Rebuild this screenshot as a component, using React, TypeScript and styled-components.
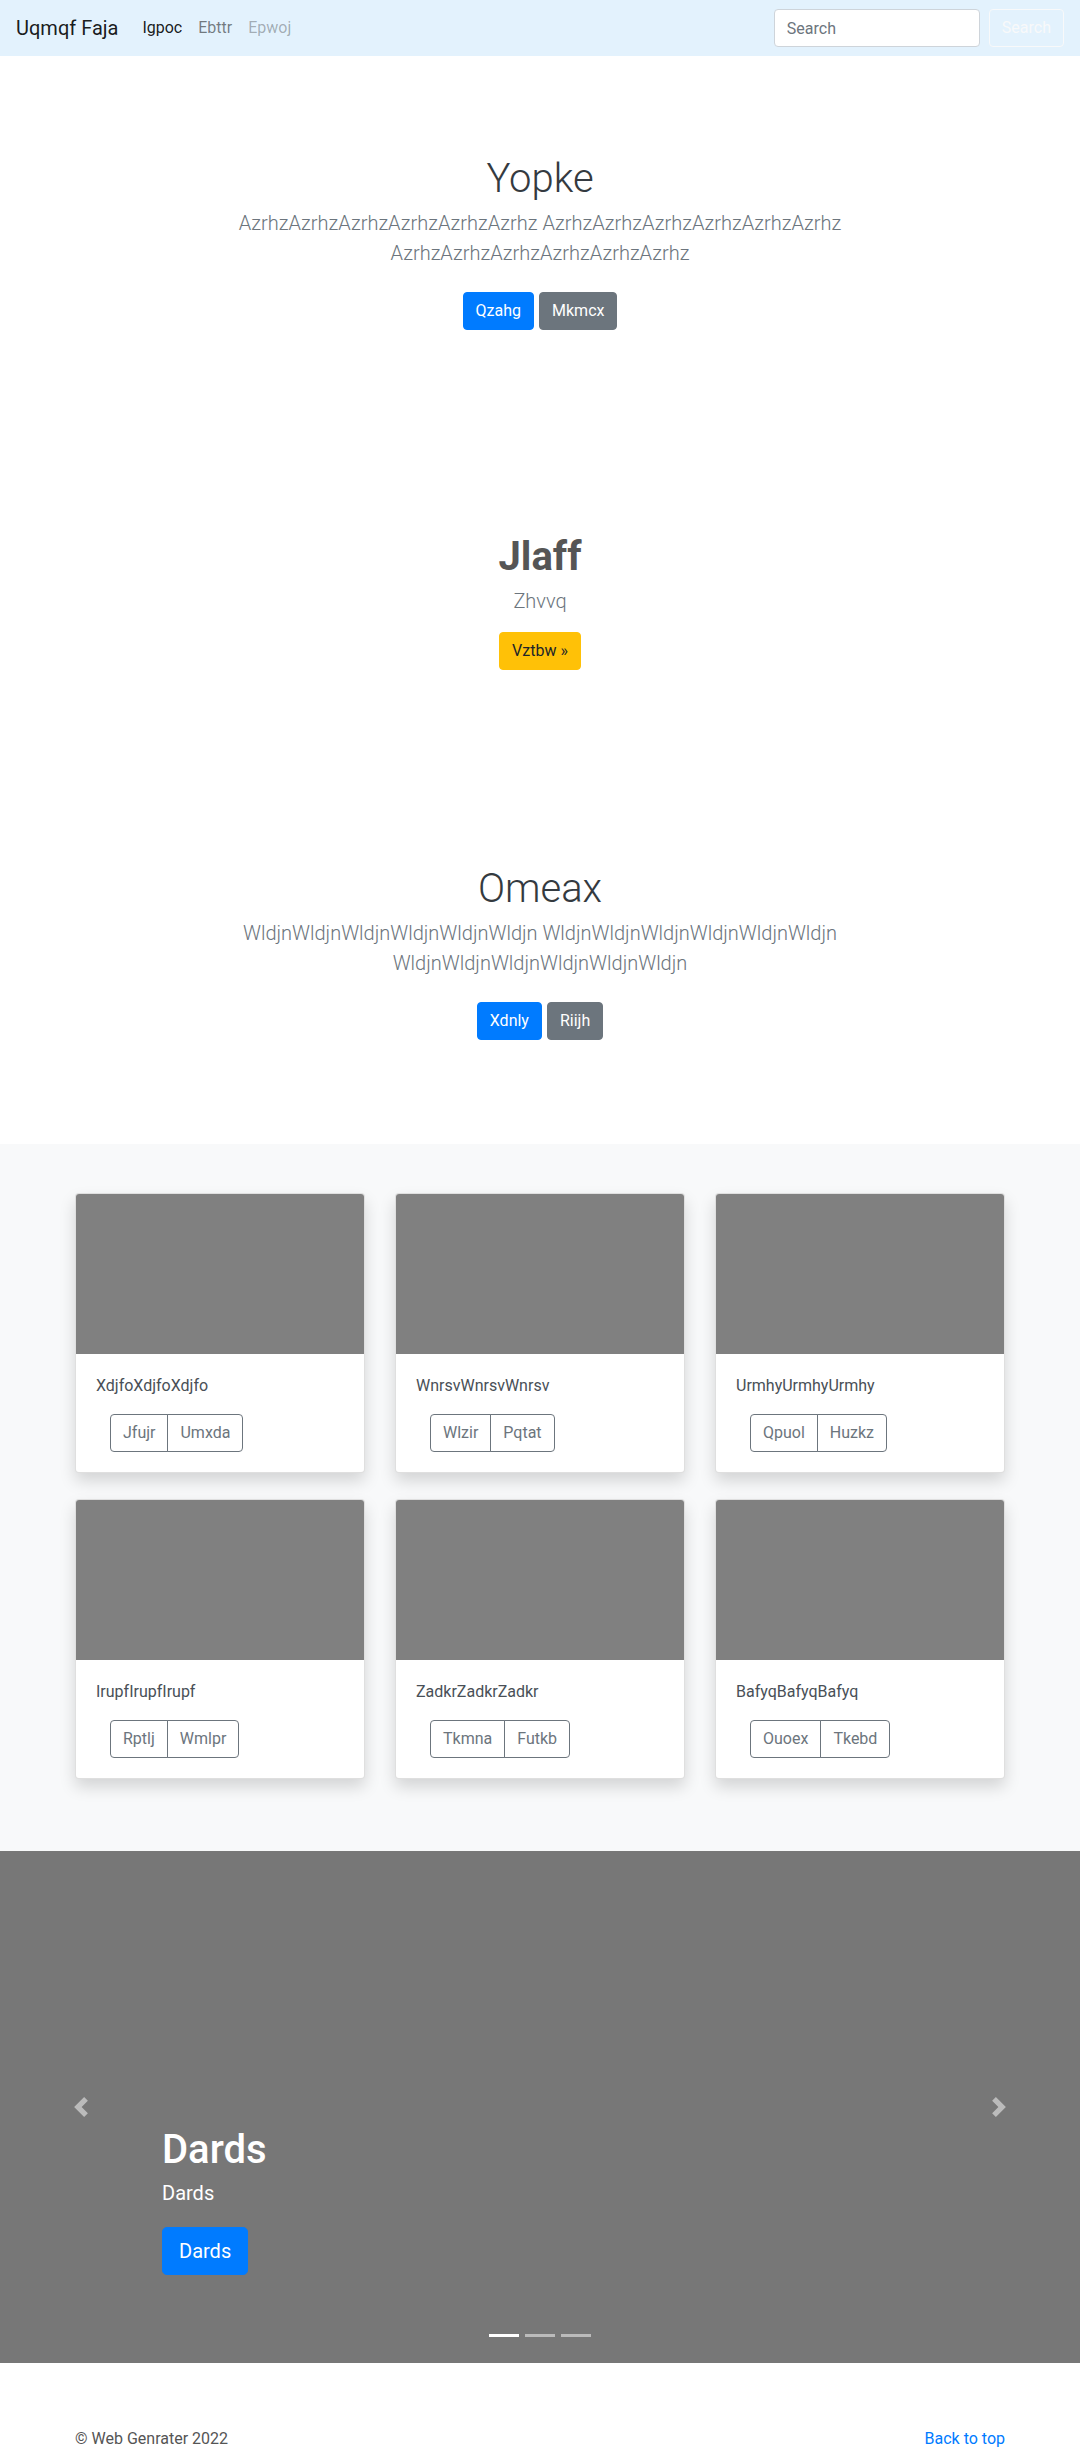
import React from "react";
import styled, { createGlobalStyle } from "styled-components";

const GlobalStyle = createGlobalStyle`
  * { box-sizing: border-box; }
  html, body { overflow-x: hidden; }
  body {
    margin: 0;
    font-family: "Segoe UI", Roboto, "Noto Sans", "Liberation Sans", sans-serif;
    font-size: 16px;
    line-height: 1.5;
    color: #212529;
    background: #fff;
  }
`;

const Navbar = styled.nav`
  display: flex;
  align-items: center;
  justify-content: space-between;
  height: 56px;
  padding: 0 16px;
  background: #e3f2fd;
`;

const NavLeft = styled.div`
  display: flex;
  align-items: center;
`;

const Brand = styled.a`
  font-size: 20px;
  line-height: 30px;
  color: rgba(0, 0, 0, 0.9);
  margin-right: 16px;
  text-decoration: none;
`;

const NavLink = styled.a<{ $state: "active" | "normal" | "disabled" }>`
  padding: 8px;
  font-size: 16px;
  text-decoration: none;
  color: ${(p) =>
    p.$state === "active"
      ? "rgba(0,0,0,0.9)"
      : p.$state === "disabled"
      ? "rgba(0,0,0,0.3)"
      : "rgba(0,0,0,0.5)"};
`;

const SearchForm = styled.form`
  display: flex;
  align-items: center;
`;

const SearchInput = styled.input`
  width: 206px;
  height: 38px;
  padding: 6px 12px;
  margin-right: 9px;
  font: inherit;
  font-size: 16px;
  color: #495057;
  background: #fff;
  border: 1px solid #ced4da;
  border-radius: 4px;
  &::placeholder { color: #6c757d; }
`;

const SearchButton = styled.button`
  height: 38px;
  padding: 6px 12px;
  font: inherit;
  font-size: 16px;
  color: #f8f9fa;
  background: transparent;
  border: 1px solid #f8f9fa;
  border-radius: 4px;
`;

const Hero = styled.section`
  padding: 96px 0;
  text-align: center;
  background: #fff;
`;

const HeroInner = styled.div`
  max-width: 610px;
  margin: 0 auto;
`;

const HeroTitle = styled.h1<{ $bold?: boolean }>`
  margin: 0 0 5px;
  padding-top: 3px;
  font-size: 40px;
  line-height: 1.2;
  font-weight: ${(p) => (p.$bold ? 700 : 300)};
  color: ${(p) => (p.$bold ? "#555" : "#343a40")};
`;

const Lead = styled.p`
  margin: 0 0 16px;
  font-size: 20px;
  font-weight: 300;
  line-height: 1.5;
  color: #6c757d;
`;

const ButtonRow = styled.div<{ $spaced?: boolean }>`
  display: flex;
  justify-content: center;
  gap: 5px;
  padding: ${(p) => (p.$spaced ? "8px 0" : "0")};
`;

const Btn = styled.a<{ $variant: "primary" | "secondary" | "warning" }>`
  display: inline-block;
  padding: 6px 12px;
  font-size: 16px;
  line-height: 1.5;
  border-radius: 4px;
  border: 1px solid transparent;
  text-decoration: none;
  background: ${(p) =>
    p.$variant === "primary" ? "#007bff" : p.$variant === "secondary" ? "#6c757d" : "#ffc107"};
  border-color: ${(p) =>
    p.$variant === "primary" ? "#007bff" : p.$variant === "secondary" ? "#6c757d" : "#ffc107"};
  color: ${(p) => (p.$variant === "warning" ? "#212529" : "#fff")};
`;

const Album = styled.section`
  background: #f8f9fa;
  padding: 49px 0 72px;
`;

const Container = styled.div`
  width: 960px;
  margin: 0 auto;
  padding: 0 15px;
`;

const CardGrid = styled.div`
  display: grid;
  grid-template-columns: repeat(3, 1fr);
  column-gap: 30px;
  row-gap: 26px;
`;

const Card = styled.div`
  background: #fff;
  border: 1px solid rgba(0, 0, 0, 0.125);
  border-radius: 4px;
  box-shadow: 0 8px 16px rgba(0, 0, 0, 0.15);
  overflow: hidden;
`;

const CardImage = styled.div`
  height: 160px;
  background: #808080;
`;

const CardBody = styled.div`
  padding: 20px;
`;

const CardText = styled.p`
  margin: 0 0 16px;
  font-size: 16px;
  line-height: 1.5;
  color: #495057;
`;

const BtnGroup = styled.div`
  display: inline-flex;
  margin-left: 14px;
`;

const OutlineBtn = styled.button`
  padding: 6px 12px;
  font: inherit;
  font-size: 16px;
  line-height: 1.5;
  color: #6c757d;
  background: transparent;
  border: 1px solid #6c757d;
  &:first-child { border-radius: 4px 0 0 4px; }
  &:last-child { border-radius: 0 4px 4px 0; margin-left: -1px; }
`;

const Carousel = styled.section`
  position: relative;
  height: 512px;
  background: #777;
  overflow: hidden;
`;

const Caption = styled.div`
  position: absolute;
  left: 15%;
  right: 15%;
  bottom: 48px;
  padding: 20px 0;
  color: #fff;
  text-align: left;
  z-index: 10;
`;

const CaptionTitle = styled.h1`
  margin: 0 0 5px;
  padding-top: 3px;
  font-size: 40px;
  line-height: 1.2;
  font-weight: 500;
`;

const CaptionText = styled.p`
  margin: 0 0 20px;
  font-size: 20px;
  line-height: 1.4;
`;

const CaptionAction = styled.div`
  display: flex;
  margin-bottom: 20px;
`;

const BtnLg = styled.a`
  display: inline-block;
  padding: 8px 16px;
  font-size: 20px;
  line-height: 1.5;
  color: #fff;
  background: #007bff;
  border: 1px solid #007bff;
  border-radius: 4.8px;
  text-decoration: none;
`;

const Control = styled.a<{ $side: "left" | "right" }>`
  position: absolute;
  top: 0;
  bottom: 0;
  ${(p) => p.$side}: 0;
  width: 15%;
  display: flex;
  align-items: center;
  justify-content: center;
  opacity: 0.5;
`;

const Indicators = styled.ol`
  position: absolute;
  left: 15%;
  right: 15%;
  bottom: 0;
  margin: 0 0 16px;
  padding: 0;
  list-style: none;
  display: flex;
  justify-content: center;
  z-index: 15;
`;

const Indicator = styled.li<{ $active?: boolean }>`
  width: 30px;
  height: 3px;
  margin: 0 3px;
  box-sizing: content-box;
  border-top: 10px solid transparent;
  border-bottom: 10px solid transparent;
  background-clip: padding-box;
  background-color: #fff;
  opacity: ${(p) => (p.$active ? 1 : 0.5)};
`;

const Footer = styled.footer`
  width: 960px;
  height: 88px;
  margin: 0 auto;
  padding: 64px 15px 0;
  display: flex;
  justify-content: space-between;
  font-size: 16px;
  line-height: 24px;
`;

const Copy = styled.p`
  margin: 0;
  color: #555;
`;

const TopLink = styled.a`
  color: #007bff;
  text-decoration: none;
`;

const cards = [
  { text: "XdjfoXdjfoXdjfo", a: "Jfujr", b: "Umxda" },
  { text: "WnrsvWnrsvWnrsv", a: "Wlzir", b: "Pqtat" },
  { text: "UrmhyUrmhyUrmhy", a: "Qpuol", b: "Huzkz" },
  { text: "IrupfIrupfIrupf", a: "Rptlj", b: "Wmlpr" },
  { text: "ZadkrZadkrZadkr", a: "Tkmna", b: "Futkb" },
  { text: "BafyqBafyqBafyq", a: "Ouoex", b: "Tkebd" },
];

const Chevron = ({ dir }: { dir: "left" | "right" }) => (
  <svg width="20" height="20" viewBox="0 0 8 8" fill="#fff">
    {dir === "left" ? (
      <path d="M5.25 0l-4 4 4 4 1.5-1.5L4.25 4l2.5-2.5L5.25 0z" />
    ) : (
      <path d="M2.75 0l-1.5 1.5L3.75 4l-2.5 2.5L2.75 8l4-4-4-4z" />
    )}
  </svg>
);

export default function App() {
  return (
    <>
      <GlobalStyle />
      <Navbar>
        <NavLeft>
          <Brand href="#">Uqmqf Faja</Brand>
          <NavLink $state="active" href="#">Igpoc</NavLink>
          <NavLink $state="normal" href="#">Ebttr</NavLink>
          <NavLink $state="disabled" href="#">Epwoj</NavLink>
        </NavLeft>
        <SearchForm onSubmit={(e) => e.preventDefault()}>
          <SearchInput placeholder="Search" />
          <SearchButton type="submit">Search</SearchButton>
        </SearchForm>
      </Navbar>

      <Hero>
        <HeroInner>
          <HeroTitle>Yopke</HeroTitle>
          <Lead>
            AzrhzAzrhzAzrhzAzrhzAzrhzAzrhz AzrhzAzrhzAzrhzAzrhzAzrhzAzrhz AzrhzAzrhzAzrhzAzrhzAzrhzAzrhz
          </Lead>
          <ButtonRow $spaced>
            <Btn $variant="primary" href="#">Qzahg</Btn>
            <Btn $variant="secondary" href="#">Mkmcx</Btn>
          </ButtonRow>
        </HeroInner>
      </Hero>

      <Hero>
        <HeroInner>
          <HeroTitle $bold>Jlaff</HeroTitle>
          <Lead>Zhvvq</Lead>
          <ButtonRow>
            <Btn $variant="warning" href="#">Vztbw »</Btn>
          </ButtonRow>
        </HeroInner>
      </Hero>

      <Hero>
        <HeroInner>
          <HeroTitle>Omeax</HeroTitle>
          <Lead>
            WldjnWldjnWldjnWldjnWldjnWldjn WldjnWldjnWldjnWldjnWldjnWldjn WldjnWldjnWldjnWldjnWldjnWldjn
          </Lead>
          <ButtonRow $spaced>
            <Btn $variant="primary" href="#">Xdnly</Btn>
            <Btn $variant="secondary" href="#">Riijh</Btn>
          </ButtonRow>
        </HeroInner>
      </Hero>

      <Album>
        <Container>
          <CardGrid>
            {cards.map((c) => (
              <Card key={c.text}>
                <CardImage />
                <CardBody>
                  <CardText>{c.text}</CardText>
                  <BtnGroup>
                    <OutlineBtn type="button">{c.a}</OutlineBtn>
                    <OutlineBtn type="button">{c.b}</OutlineBtn>
                  </BtnGroup>
                </CardBody>
              </Card>
            ))}
          </CardGrid>
        </Container>
      </Album>

      <Carousel>
        <Caption>
          <CaptionTitle>Dards</CaptionTitle>
          <CaptionText>Dards</CaptionText>
          <CaptionAction>
            <BtnLg href="#">Dards</BtnLg>
          </CaptionAction>
        </Caption>
        <Control $side="left" href="#">
          <Chevron dir="left" />
        </Control>
        <Control $side="right" href="#">
          <Chevron dir="right" />
        </Control>
        <Indicators>
          <Indicator $active />
          <Indicator />
          <Indicator />
        </Indicators>
      </Carousel>

      <Footer>
        <Copy>© Web Genrater 2022</Copy>
        <TopLink href="#">Back to top</TopLink>
      </Footer>
    </>
  );
}
